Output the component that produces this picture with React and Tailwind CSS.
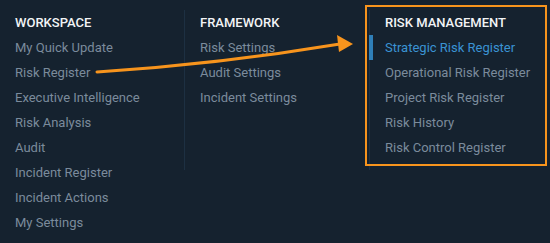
import React from 'react';

const workspace = [
  'My Quick Update',
  'Risk Register',
  'Executive Intelligence',
  'Risk Analysis',
  'Audit',
  'Incident Register',
  'Incident Actions',
  'My Settings',
];

const framework = ['Risk Settings', 'Audit Settings', 'Incident Settings'];

const riskManagement = [
  'Strategic Risk Register',
  'Operational Risk Register',
  'Project Risk Register',
  'Risk History',
  'Risk Control Register',
];

const Column = ({ title, items, active, divider, width }) => (
  <div className={`${width} ${divider ? 'border-l border-[#1d3042] h-[160px]' : ''} shrink-0 self-start`}>
    <div className="pl-[15px] h-[25px] leading-[25px] text-[13px] font-medium text-[#f2f4f6] uppercase">
      {title}
    </div>
    {items.map((item) => (
      <div
        key={item}
        className={`relative pl-[15px] h-[25px] leading-[25px] text-[13px] ${
          item === active ? 'text-[#3a93d3]' : 'text-[#7b8b9c]'
        }`}
      >
        {item === active && <span className="absolute left-[-1px] top-0 w-[4px] h-[25px] bg-[#2f7fb8]" />}
        {item}
      </div>
    ))}
  </div>
);

const App = () => {
  return (
    <div
      className="relative w-[550px] h-[243px] bg-[#15222f] overflow-hidden"
      style={{ fontFamily: 'Roboto, "Liberation Sans", sans-serif' }}
    >
      <div className="flex pt-[10px]">
        <Column title="Workspace" items={workspace} width="w-[184px]" />
        <Column title="Framework" items={framework} width="w-[185px]" divider />
        <Column title="Risk Management" items={riskManagement} width="w-[181px]" divider active="Strategic Risk Register" />
      </div>

      {/* highlight box */}
      <div className="absolute left-[365px] top-[5px] w-[182px] h-[161px] border-2 border-[#f7941d]" />

      {/* arrow */}
      <svg className="absolute left-0 top-0 pointer-events-none" width="550" height="243" viewBox="0 0 550 243">
        <path d="M97 72 Q 220 64 340 44" fill="none" stroke="#f7941d" strokeWidth="3" strokeLinecap="round" />
        <polygon points="353,44 337,35 339,52" fill="#f7941d" />
      </svg>
    </div>
  );
};

export default App;
